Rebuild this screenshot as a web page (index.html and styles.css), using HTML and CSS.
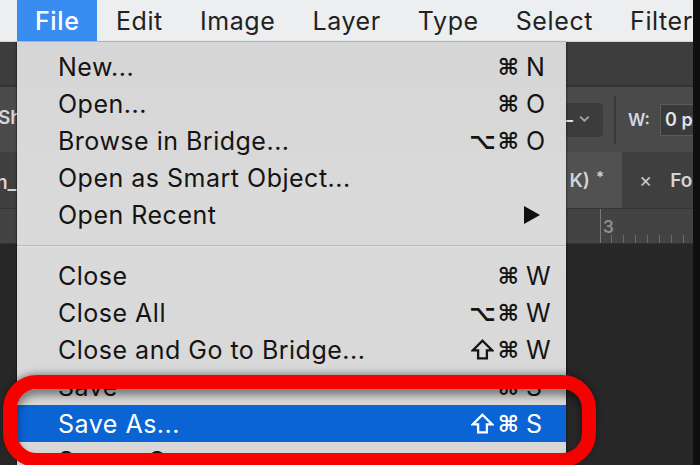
FILE: index.html
```html
<!DOCTYPE html>
<html>
<head>
<meta charset="utf-8">
<link rel="stylesheet" href="styles.css">
</head>
<body>
<div class="screen">
  <div class="main">
    <nav class="menubar">
      <span class="mtitle active">File</span>
      <span class="mtitle">Edit</span>
      <span class="mtitle">Image</span>
      <span class="mtitle">Layer</span>
      <span class="mtitle">Type</span>
      <span class="mtitle">Select</span>
      <span class="mtitle">Filter</span>
    </nav>
    <div class="workspace">
      <div class="appbar"></div>
      <div class="options">
        <span class="opt-left">Show</span>
        <span class="opt-spacer"></span>
        <span class="dd"><span class="dash">–</span><span class="chev">⌄</span></span>
        <span class="vsep"></span>
        <span class="wlabel">W:</span>
        <span class="winput">0 px</span>
      </div>
      <div class="tabs">
        <span class="tab-left">n_</span>
        <span class="opt-spacer"></span>
        <span class="tab active-tab">K) <span class="star">*</span></span>
        <span class="tab other-tab"><span class="x">×</span> Fo</span>
      </div>
      <div class="ruler">
        <span class="ruler-spacer"></span>
        <span class="ruler-marks"><span class="num">3</span></span>
      </div>
      <div class="canvas"></div>
    </div>
  </div>
  <div class="edge"></div>

  <div class="dropdown">
    <div class="item"><span class="label">New...</span><span class="mods">⌘</span><span class="key">N</span></div>
    <div class="item"><span class="label">Open...</span><span class="mods">⌘</span><span class="key">O</span></div>
    <div class="item"><span class="label">Browse in Bridge...</span><span class="mods">⌥⌘</span><span class="key">O</span></div>
    <div class="item"><span class="label">Open as Smart Object...</span><span class="mods"></span><span class="key"></span></div>
    <div class="item"><span class="label">Open Recent</span><span class="mods"></span><span class="key"><span class="arrow"></span></span></div>
    <div class="sep"></div>
    <div class="item"><span class="label">Close</span><span class="mods">⌘</span><span class="key">W</span></div>
    <div class="item"><span class="label">Close All</span><span class="mods">⌥⌘</span><span class="key">W</span></div>
    <div class="item"><span class="label">Close and Go to Bridge...</span><span class="mods"><svg class="shift" viewBox="0 0 24 22" aria-label="Shift"><path d="M12 1.8 L22.2 12 H16.6 V20.4 H7.4 V12 H1.8 Z"/></svg>⌘</span><span class="key">W</span></div>
    <div class="item"><span class="label">Save</span><span class="mods">⌘</span><span class="key">S</span></div>
    <div class="item selected"><span class="label">Save As...</span><span class="mods"><svg class="shift" viewBox="0 0 24 22" aria-label="Shift"><path d="M12 1.8 L22.2 12 H16.6 V20.4 H7.4 V12 H1.8 Z"/></svg>⌘</span><span class="key">S</span></div>
    <div class="item"><span class="label">Save a Copy...</span><span class="mods"></span><span class="key"></span></div>
  </div>

  <div class="ring"></div>
</div>
</body>
</html>
```

FILE: styles.css
```css
html, body {
  margin: 0;
  padding: 0;
  background: #1e1e1e;
}

.screen {
  position: relative;
  width: 700px;
  height: 465px;
  overflow: hidden;
  display: flex;
  font-family: "Inter", "DejaVu Sans", sans-serif;
}

.main {
  flex: 1;
  min-width: 0;
  display: flex;
  flex-direction: column;
}

.edge {
  width: 7px;
  flex-shrink: 0;
  background: #0f0f0f;
}

/* top menu bar */
.menubar {
  height: 42px;
  background: #eceef0;
  border-bottom: 1px solid #d2d4d6;
  box-sizing: border-box;
  display: flex;
  padding-left: 17px;
  overflow: hidden;
}

.mtitle {
  display: flex;
  align-items: center;
  padding: 0 18.5px;
  font-size: 25px;
  color: #222;
  letter-spacing: 0.6px;
  white-space: nowrap;
}

.mtitle.active {
  background: #3a8df0;
  color: #fff;
  font-weight: 500;
  padding: 0 18px;
}

/* photoshop workspace behind */
.workspace {
  flex: 1;
  display: flex;
  flex-direction: column;
  background: #262626;
}

.appbar {
  height: 43px;
  background: #3d3d3d;
  border-bottom: 2px solid #333;
}

.options {
  height: 65px;
  background: #4a4a4a;
  display: flex;
  align-items: center;
  color: #d6d6d6;
  font-size: 19px;
  font-weight: 600;
  overflow: hidden;
}

.opt-left {
  margin-left: -2px;
  margin-top: -4px;
}

.opt-spacer {
  flex: 1;
}

.dd {
  width: 42px;
  height: 34px;
  margin-right: 11px;
  background: #3c3c3c;
  border-radius: 4px;
  display: flex;
  align-items: center;
  gap: 5px;
  color: #e0e0e0;
  font-size: 18px;
  box-sizing: border-box;
  padding-left: 3px;
  flex-shrink: 0;
}

.chev {
  color: #a8a8a8;
  font-size: 16px;
  margin-top: -8px;
}

.vsep {
  width: 2px;
  height: 48px;
  background: #383838;
  margin-right: 12px;
  flex-shrink: 0;
}

.wlabel {
  color: #cfd6e2;
  font-size: 17px;
  margin-right: 10px;
}

.winput {
  width: 33px;
  height: 32px;
  background: #3a3a3a;
  border: 1px solid #5b5b5b;
  border-right: none;
  box-sizing: border-box;
  color: #dfe3ea;
  font-size: 18px;
  padding-left: 4px;
  display: flex;
  align-items: center;
  white-space: nowrap;
  overflow: hidden;
  flex-shrink: 0;
}

.tabs {
  height: 56px;
  background: #3f3f3f;
  display: flex;
  align-items: stretch;
  color: #d4d4d4;
  font-size: 19px;
  font-weight: 600;
  overflow: hidden;
}

.tab-left {
  display: flex;
  align-items: center;
  margin-left: -4px;
  margin-top: 4px;
}

.tab {
  display: flex;
  align-items: center;
  white-space: nowrap;
  overflow: hidden;
  flex-shrink: 0;
}

.active-tab {
  background: #515151;
  width: 56px;
  margin-right: 3px;
  justify-content: flex-end;
  padding-right: 18px;
  box-sizing: border-box;
}

.star {
  font-size: 15px;
  margin-left: 6px;
  margin-top: -8px;
}

.other-tab {
  width: 68px;
  padding-left: 14px;
  box-sizing: border-box;
  gap: 18px;
}

.x {
  font-weight: 400;
  color: #c8c8c8;
  font-size: 20px;
}

.ruler {
  height: 34px;
  background: #434343;
  border-top: 1px solid #363636;
  border-bottom: 1px solid #333;
  display: flex;
}

.ruler-spacer {
  flex: 1;
}

.ruler-marks {
  width: 93px;
  background-image:
    linear-gradient(#7a7a7a, #7a7a7a),
    repeating-linear-gradient(90deg, transparent 0 11px, #6d6d6d 11px 12px);
  background-size: 1px 34px, 100% 8px;
  background-position: 0 0, 0 bottom;
  background-repeat: no-repeat, repeat-x;
  color: #8f8f8f;
  font-size: 17px;
  font-weight: 600;
  box-sizing: border-box;
  padding-left: 3px;
  padding-top: 8px;
}

.canvas {
  flex: 1;
  background: #272727;
}

/* file dropdown */
.dropdown {
  position: absolute;
  left: 17px;
  top: 42px;
  width: 549px;
  height: 440px;
  background: linear-gradient(#d6d6d6, #dadada 40%, #d8d8d8);
  box-shadow: 1px 0 2px rgba(0,0,0,0.35), -1px 0 1px rgba(0,0,0,0.3);
  padding-top: 6px;
  box-sizing: border-box;
  color: #141414;
}

.item {
  height: 37px;
  display: grid;
  grid-template-columns: 1fr auto 26px;
  column-gap: 5px;
  align-items: center;
  padding-left: 41px;
  padding-right: 14px;
  font-size: 25px;
  letter-spacing: 0.5px;
}

.label {
  white-space: nowrap;
}

.mods {
  font-family: "DejaVu Sans", sans-serif;
  font-size: 23px;
  text-align: right;
  letter-spacing: 2px;
  display: flex;
  justify-content: flex-end;
  align-items: center;
  font-weight: bold;
}

.shift {
  width: 23px;
  height: 21px;
  margin-right: 4px;
  fill: none;
  stroke: currentColor;
  stroke-width: 2.4;
  stroke-linejoin: miter;
}

.key {
  font-size: 25px;
  display: flex;
  align-items: center;
}

.arrow {
  width: 0;
  height: 0;
  border-left: 16px solid #111;
  border-top: 9px solid transparent;
  border-bottom: 9px solid transparent;
  margin-left: -2px;
}

.sep {
  height: 24px;
  display: flex;
  align-items: center;
  padding-top: 2px;
  box-sizing: border-box;
}

.sep::before {
  content: "";
  flex: 1;
  height: 1px;
  background: #b8b8b8;
  border-bottom: 1px solid #e4e4e4;
}

.item.selected {
  background: #0b64d3;
  color: #fff;
}

/* red annotation ring */
.ring {
  position: absolute;
  left: 3px;
  top: 375px;
  width: 593px;
  height: 92px;
  border: 14px solid #f60000;
  border-radius: 34px;
  box-sizing: border-box;
  box-shadow: 0 -2px 6px rgba(0,0,0,0.35), inset 0 6px 8px rgba(0,0,0,0.45);
}
```
